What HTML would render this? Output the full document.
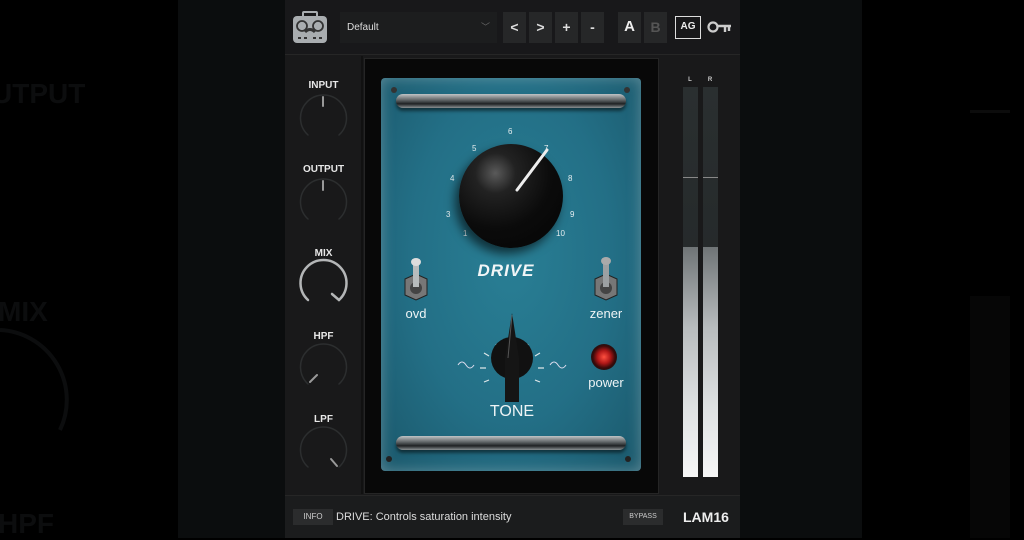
<!DOCTYPE html>
<html><head><meta charset="utf-8"><style>
*{margin:0;padding:0;box-sizing:border-box}
body{width:1024px;height:538px;overflow:hidden;background:#000;font-family:"Liberation Sans",sans-serif;position:relative}
.abs{position:absolute}
.band{background:#0b0d0e}
.ghost{color:#0c0d0e;font-weight:bold;font-size:28px}
.lbl{position:absolute;width:77px;text-align:center;color:#e8e8e8;font-weight:bold;font-size:10px;left:285px}
.btn{position:absolute;top:12px;height:31px;width:23px;background:#262728;color:#ddd;font-size:14px;text-align:center;line-height:30px;font-weight:bold}
.num{position:absolute;color:#e6eef0;font-size:8px}
.lab{position:absolute;color:#eef4f5;font-size:13px;text-align:center}
</style></head><body>
<div class="abs band" style="left:178px;top:0;width:108px;height:538px"></div>
<div class="abs band" style="left:740px;top:0;width:122px;height:538px"></div>
<div class="abs ghost" style="left:-8px;top:78px">UTPUT</div>
<div class="abs ghost" style="left:-2px;top:296px">MIX</div>
<div class="abs ghost" style="left:-2px;top:508px">HPF</div>
<svg class="abs" style="left:0;top:320px" width="100" height="120"><path d="M0 10 A70 70 0 0 1 60 110" fill="none" stroke="#0c0d0e" stroke-width="4"/></svg>
<div class="abs" style="left:970px;top:296px;width:40px;height:242px;background:#060606"></div>
<div class="abs" style="left:970px;top:110px;width:40px;height:3px;background:#0c0c0c"></div>

<div class="abs" style="left:285px;top:0;width:455px;height:538px;background:#19191a"></div>
<div class="abs" style="left:285px;top:0;width:455px;height:55px;background:#18181a;border-bottom:1px solid #262626"></div>
<svg class="abs" style="left:292px;top:11px" width="36" height="33" viewBox="0 0 36 33">
<rect x="1" y="5" width="34" height="27" rx="4" fill="#a9adb0"/>
<rect x="11" y="1" width="14" height="5" rx="1" fill="none" stroke="#a9adb0" stroke-width="2"/>
<circle cx="10" cy="15" r="5" fill="none" stroke="#333" stroke-width="1.8"/>
<circle cx="26" cy="15" r="5" fill="none" stroke="#333" stroke-width="1.8"/>
<path d="M13 21 Q18 16 23 21" stroke="#333" stroke-width="3" fill="none"/>
<rect x="6" y="26" width="3" height="2" fill="#333"/><rect x="12" y="26" width="3" height="2" fill="#333"/><rect x="21" y="26" width="3" height="2" fill="#333"/><rect x="27" y="26" width="3" height="2" fill="#333"/>
</svg>
<div class="abs" style="left:340px;top:12px;width:157px;height:31px;background:#1c1d1e;color:#ddd;font-size:10px;line-height:31px;padding-left:7px">Default<span style="position:absolute;right:7px;color:#666;font-size:9px">﹀</span></div>
<div class="btn" style="left:503px">&lt;</div>
<div class="btn" style="left:529px">&gt;</div>
<div class="btn" style="left:555px">+</div>
<div class="btn" style="left:581px">-</div>
<div class="btn" style="left:618px;font-size:15px;color:#eee">A</div>
<div class="btn" style="left:644px;font-size:14px;color:#555">B</div>
<div class="abs" style="left:675px;top:16px;width:26px;height:23px;border:1.5px solid #ddd;color:#eee;font-size:10px;font-weight:bold;text-align:center;line-height:20px">AG</div>
<svg class="abs" style="left:707px;top:19px" width="25" height="16"><circle cx="6" cy="8" r="4.5" fill="none" stroke="#ccc" stroke-width="2.2"/><path d="M10 7 H24 M18 7 V13 M22 7 V12" stroke="#ccc" stroke-width="2.4"/></svg>

<div class="abs" style="left:361px;top:56px;width:2px;height:438px;background:#111"></div>
<div class="lbl" style="top:80px">INPUT</div>
<div class="lbl" style="top:164px">OUTPUT</div>
<div class="lbl" style="top:248px">MIX</div>
<div class="lbl" style="top:331px">HPF</div>
<div class="lbl" style="top:414px">LPF</div>
<svg class="abs" style="left:285px;top:56px" width="77" height="440">
<g fill="none" stroke-linecap="round">
<path d="M23 79 A23 23 0 1 1 54 79" stroke="#2c2e2f" stroke-width="1.5"/>
<path d="M38 41 V50" stroke="#999" stroke-width="2"/>
<path d="M23 163 A23 23 0 1 1 54 163" stroke="#2c2e2f" stroke-width="1.5"/>
<path d="M38 125 V134" stroke="#999" stroke-width="2"/>
<path d="M23 244 A23 23 0 1 1 54 244" stroke="#b4b6b7" stroke-width="2.5"/>
<path d="M54 244 L47 238" stroke="#b4b6b7" stroke-width="2.5"/>
<path d="M23 328 A23 23 0 1 1 54 328" stroke="#2c2e2f" stroke-width="1.5"/>
<path d="M25 326 L32 319" stroke="#999" stroke-width="2"/>
<path d="M23 411 A23 23 0 1 1 54 411" stroke="#2c2e2f" stroke-width="1.5"/>
<path d="M52 410 L46 403" stroke="#999" stroke-width="2"/>
</g></svg>

<div class="abs" style="left:364px;top:58px;width:295px;height:436px;background:#080808;border:1px solid #252525"></div>
<div class="abs" style="left:381px;top:78px;width:260px;height:393px;border-radius:4px;background:radial-gradient(ellipse at 50% 45%,#297f95 0%,#236f86 55%,#1b586b 100%);box-shadow:inset 0 0 14px rgba(190,210,215,.4)"></div>
<div class="abs" style="left:396px;top:94px;width:230px;height:14px;border-radius:7px;background:linear-gradient(#c0c4c6,#5b6062 45%,#1f2224 70%,#8a9092);box-shadow:0 3px 3px rgba(0,0,0,.5)"></div>
<div class="abs" style="left:396px;top:436px;width:230px;height:14px;border-radius:7px;background:linear-gradient(#c0c4c6,#5b6062 45%,#1f2224 70%,#8a9092);box-shadow:0 3px 3px rgba(0,0,0,.5)"></div>
<div class="abs" style="left:391px;top:87px;width:6px;height:6px;border-radius:50%;background:#333"></div>
<div class="abs" style="left:624px;top:87px;width:6px;height:6px;border-radius:50%;background:#333"></div>
<div class="abs" style="left:386px;top:456px;width:6px;height:6px;border-radius:50%;background:#222"></div>
<div class="abs" style="left:625px;top:456px;width:6px;height:6px;border-radius:50%;background:#222"></div>
<div class="num" style="left:508px;top:127px">6</div>
<div class="num" style="left:472px;top:144px">5</div>
<div class="num" style="left:544px;top:144px">7</div>
<div class="num" style="left:450px;top:174px">4</div>
<div class="num" style="left:568px;top:174px">8</div>
<div class="num" style="left:446px;top:210px">3</div>
<div class="num" style="left:570px;top:210px">9</div>
<div class="num" style="left:463px;top:229px">1</div>
<div class="num" style="left:556px;top:229px">10</div>
<div class="abs" style="left:459px;top:144px;width:104px;height:104px;border-radius:50%;background:radial-gradient(circle at 35% 28%,#5a5a5a 0%,#222 20%,#0b0b0b 55%,#040404 100%);box-shadow:-4px 6px 10px rgba(0,0,0,.6)"></div>
<svg class="abs" style="left:459px;top:144px" width="104" height="104"><path d="M58 46 L88 6" stroke="#eee" stroke-width="3" stroke-linecap="round"/></svg>
<div class="abs" style="left:466px;top:261px;width:80px;text-align:center;color:#f2f6f7;font-size:17px;font-weight:bold;font-style:italic;letter-spacing:1px">DRIVE</div>
<svg class="abs" style="left:400px;top:255px" width="32" height="50"><polygon points="5,24 16,19 27,24 27,40 16,45 5,40" fill="#777" stroke="#222"/><circle cx="16" cy="33" r="6" fill="#444"/><rect x="13" y="8" width="6" height="24" fill="#b8bcbd"/><ellipse cx="16" cy="7" rx="5" ry="4" fill="#ddd"/></svg>
<svg class="abs" style="left:590px;top:255px" width="32" height="50"><polygon points="5,24 16,19 27,24 27,40 16,45 5,40" fill="#777" stroke="#222"/><circle cx="16" cy="33" r="6" fill="#444"/><rect x="13" y="6" width="6" height="26" fill="#9ca0a2"/><ellipse cx="16" cy="6" rx="5" ry="4" fill="#aaa"/></svg>
<div class="lab" style="left:396px;top:306px;width:40px">ovd</div>
<div class="lab" style="left:581px;top:306px;width:50px">zener</div>
<svg class="abs" style="left:450px;top:310px" width="125" height="100">
<g stroke="#dde6e8" stroke-width="1.2">
<path d="M62 30 v6 M46 34 l3 5 M78 34 l-3 5 M34 43 l5 3 M90 43 l-5 3 M30 58 h6 M94 58 h-6 M34 72 l5 -2 M90 72 l-5 -2"/></g>
<path d="M8 55 q4 -6 8 0 q4 6 8 0" stroke="#dde" fill="none"/>
<path d="M100 55 q4 -6 8 0 q4 6 8 0" stroke="#dde" fill="none"/>
<circle cx="62" cy="48" r="21" fill="#111"/>
<polygon points="62,3 55,48 55,92 69,92 69,48" fill="#151515"/>
<path d="M62 5 L58 48" stroke="#555" stroke-width="1"/>
</svg>
<div class="lab" style="left:480px;top:403px;width:64px;font-size:16px">TONE</div>
<div class="abs" style="left:591px;top:344px;width:26px;height:26px;border-radius:50%;background:radial-gradient(circle,#ff5040 0%,#b01818 35%,#3a0a0a 60%,#151515 80%)"></div>
<div class="lab" style="left:582px;top:375px;width:48px">power</div>

<div class="abs" style="left:683px;top:77px;width:14px;text-align:center;color:#ccc;font-size:6px;font-weight:bold">L</div>
<div class="abs" style="left:703px;top:77px;width:14px;text-align:center;color:#ccc;font-size:6px;font-weight:bold">R</div>
<div class="abs" style="left:683px;top:87px;width:15px;height:390px;background:linear-gradient(#2a2f30,#1f2324)"></div>
<div class="abs" style="left:703px;top:87px;width:15px;height:390px;background:linear-gradient(#2a2f30,#1f2324)"></div>
<div class="abs" style="left:683px;top:177px;width:15px;height:1px;background:#888"></div>
<div class="abs" style="left:703px;top:177px;width:15px;height:1px;background:#888"></div>
<div class="abs" style="left:683px;top:247px;width:15px;height:230px;background:linear-gradient(#6f7476,#b8bcbe 35%,#dfe2e3 70%,#f6f6f6)"></div>
<div class="abs" style="left:703px;top:247px;width:15px;height:230px;background:linear-gradient(#6f7476,#b8bcbe 35%,#dfe2e3 70%,#f6f6f6)"></div>

<div class="abs" style="left:285px;top:495px;width:455px;height:43px;background:#1b1c1d;border-top:1px solid #262626"></div>
<div class="abs" style="left:293px;top:509px;width:40px;height:16px;background:#2b2c2d;color:#ccc;font-size:8px;text-align:center;line-height:16px">INFO</div>
<div class="abs" style="left:336px;top:511px;color:#ddd;font-size:11px">DRIVE: Controls saturation intensity</div>
<div class="abs" style="left:623px;top:509px;width:40px;height:16px;background:#2b2c2d;color:#ccc;font-size:7px;text-align:center;line-height:16px">BYPASS</div>
<div class="abs" style="left:683px;top:509px;color:#eee;font-size:14px;font-weight:bold">LAM16</div>
</body></html>
